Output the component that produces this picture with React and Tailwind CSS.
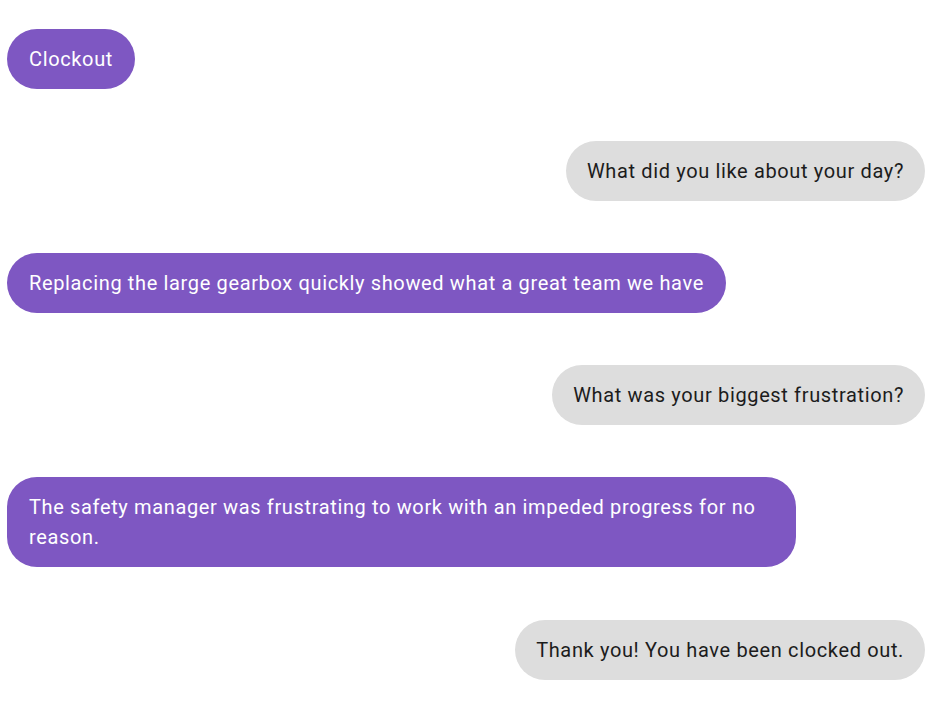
import React from 'react';

const messages = [
    { from: 'me', text: 'Clockout' },
    { from: 'bot', text: 'What did you like about your day?' },
    { from: 'me', text: 'Replacing the large gearbox quickly showed what a great team we have' },
    { from: 'bot', text: 'What was your biggest frustration?' },
    { from: 'me', text: 'The safety manager was frustrating to work with an impeded progress for no reason.' },
    { from: 'bot', text: 'Thank you! You have been clocked out.' },
];

export default function App() {
    return (
        <div className="min-h-screen bg-white pt-[29px] pl-[7px] pr-[5px] font-['Roboto',sans-serif] text-[20px] leading-[30px] tracking-[0.64px]">
            <div className="flex flex-col gap-[52px]">
                {messages.map((m, i) => (
                    <div
                        key={i}
                        className={(m.from === 'me' ? 'flex justify-start' : 'flex justify-end') + (i === messages.length - 1 ? ' mt-[1px]' : '')}
                    >
                        {m.from === 'me' ? (
                            <div className="max-w-[789px] rounded-[30px] bg-[#7e57c2] px-[22px] py-[15px] text-white">
                                {m.text}
                            </div>
                        ) : (
                            <div className="rounded-[30px] bg-[#dddddd] px-[21px] py-[15px] text-[#1c1c1c]">
                                {m.text}
                            </div>
                        )}
                    </div>
                ))}
            </div>
        </div>
    );
}
